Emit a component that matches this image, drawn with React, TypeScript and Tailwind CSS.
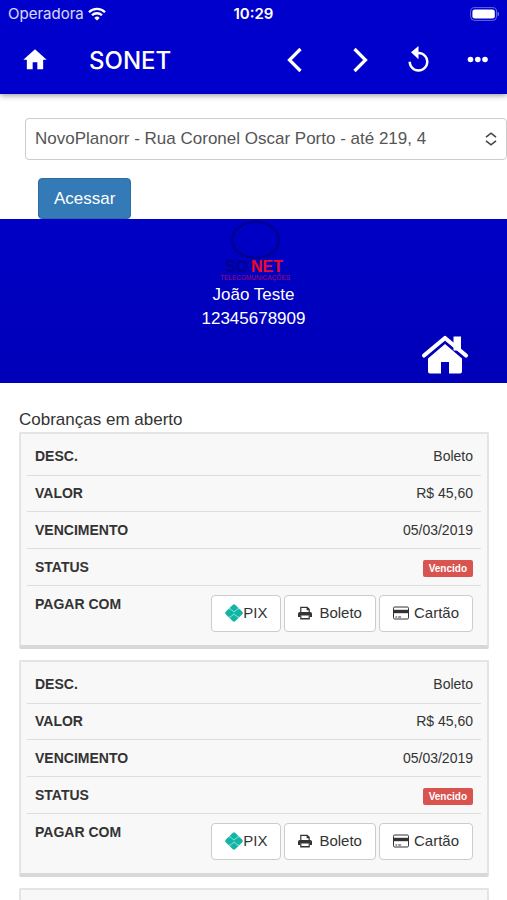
import { useState } from "react";

interface Charge {
  id: number;
  description: string;
  amount: string;
  dueDate: string;
  status: string;
}

const charges: Charge[] = [
  { id: 1, description: "Boleto", amount: "R$ 45,60", dueDate: "05/03/2019", status: "Vencido" },
  { id: 2, description: "Boleto", amount: "R$ 45,60", dueDate: "05/03/2019", status: "Vencido" },
  { id: 3, description: "Boleto", amount: "R$ 45,60", dueDate: "05/03/2019", status: "Vencido" },
];

const plans = ["NovoPlanorr - Rua Coronel Oscar Porto - até 219, 4"];

function StatusBar() {
  return (
    <div className="grid h-7 grid-cols-3 items-center px-2 text-white">
      <div className="flex items-center gap-1 text-[15px] text-white/85">
        <span>Operadora</span>
        <svg viewBox="0 0 18 14" className="h-3.5 w-[18px] shrink-0" fill="none" stroke="white" strokeWidth="2.3">
          <path d="M1 5.2a11.3 11.3 0 0 1 16 0" />
          <path d="M4 8.3a7.1 7.1 0 0 1 10 0" />
          <path d="M9 13.6 6.3 10.9a3.8 3.8 0 0 1 5.4 0z" fill="white" stroke="none" />
        </svg>
      </div>
      <span className="text-center text-[15px] font-semibold">10:29</span>
      <svg viewBox="0 0 30 14" className="h-3.5 w-[30px] justify-self-end">
        <rect x="1.6" y="0.6" width="26" height="12.8" rx="4" fill="none" stroke="white" strokeOpacity="0.4" />
        <rect x="3.4" y="2.4" width="22.4" height="9.2" rx="2.4" fill="white" />
        <path d="M28.6 4.8a2.3 2.3 0 0 1 0 4.4z" fill="white" fillOpacity="0.45" />
      </svg>
    </div>
  );
}

function NavBar() {
  return (
    <nav className="flex h-[66px] items-center pl-5 pr-3.5 text-white">
      <button aria-label="Início" className="flex size-[30px] items-center justify-center">
        <svg viewBox="0 0 24 24" className="size-7" fill="currentColor">
          <path d="M10 19v-6h4v6h5v-8h3L12 2 2 11h3v8z" />
        </svg>
      </button>
      <h1 className="ml-[39px] flex-1 text-2xl font-medium">SONET</h1>
      <div className="flex items-center gap-8">
        <button aria-label="Voltar" className="flex size-[30px] items-center justify-center">
          <svg viewBox="0 0 30 30" className="size-[30px]" fill="none" stroke="currentColor" strokeWidth="3.2">
            <path d="M23.5 3 12.5 14l11 11" />
          </svg>
        </button>
        <button aria-label="Avançar" className="flex size-[30px] items-center justify-center">
          <svg viewBox="0 0 30 30" className="size-[30px]" fill="none" stroke="currentColor" strokeWidth="3.2">
            <path d="m15.500 3 11 11-11 11" />
          </svg>
        </button>
        <button aria-label="Recarregar" className="flex size-[30px] items-center justify-center">
          <svg viewBox="-2 0 24 24" className="size-[30px]" fill="currentColor">
            <path d="M12 4.500V0L6 5l6 5.500V6.500c3.310 0 6 2.690 6 6s-2.690 6-6 6-6-2.690-6-6H4c0 4.420 3.580 8 8 8s8-3.580 8-8-3.580-8-8-8z" />
          </svg>
        </button>
        <button aria-label="Mais opções" className="flex size-[30px] items-center justify-center">
          <svg viewBox="0 0 30 30" className="size-[30px]" fill="currentColor">
            <circle cx="7.5" cy="13.5" r="2.8" />
            <circle cx="14.8" cy="13.5" r="2.8" />
            <circle cx="22" cy="13.5" r="2.8" />
          </svg>
        </button>
      </div>
    </nav>
  );
}

function Logo() {
  return (
    <svg viewBox="0 0 84 64" className="h-16 w-[84px]" role="img" aria-label="Sonet Telecomunicações">
      <ellipse cx="43.5" cy="21" rx="23.5" ry="18" fill="none" stroke="#00008a" strokeWidth="2.2" />
      <g fontFamily="Liberation Sans, Arial, sans-serif">
        <text x="13" y="53" fontSize="16" fontWeight="bold" fill="#00008a">
          SO
        </text>
        <text x="39" y="53" fontSize="16" fontWeight="bold" fill="#f00a1e">
          NET
        </text>
        <text x="8" y="61" fontSize="6.5" fill="#a80a68">
          TELECOMUNICAÇÕES
        </text>
      </g>
    </svg>
  );
}

function PixIcon() {
  return (
    <svg viewBox="0 0 18 18" className="size-[18px]">
      <path
        d="M7.6.9a2 2 0 0 1 2.8 0l6.700 6.700a2 2 0 0 1 0 2.800l-6.700 6.700a2 2 0 0 1-2.800 0L.9 10.400a2 2 0 0 1 0-2.800z"
        fill="#12b5a5"
      />
      <path
        d="M4 4.900h.7c.7 0 1.200.3 1.600.7l2 2c.4.4 1 .4 1.400 0l2-2c.4-.4.9-.7 1.600-.7h.7M4 13.100h.7c.7 0 1.200-.3 1.600-.7l2-2c.4-.4 1-.4 1.400 0l2 2c.4.4.9.7 1.600.7h.7"
        fill="none"
        stroke="#c5f0ea"
        strokeWidth="0.8"
      />
    </svg>
  );
}

function PrinterIcon() {
  return (
    <svg viewBox="0 0 14 14" className="size-3.5" fill="#333">
      <path d="M2.2 6.500V.7h7.200l2.400 2.400v3.400h-1.200V4.200H8.600V1.900H3.400v4.600z" />
      <path d="M1.800 6h10.400A1.800 1.800 0 0 1 14 7.800v3.200h-2.200V9.400H2.200V11H0V7.800A1.800 1.800 0 0 1 1.800 6z" />
      <path d="M2.200 9.200h1.200v2.900h7.200V9.200h1.200v4.200H2.200z" />
    </svg>
  );
}

function CardIcon() {
  return (
    <svg viewBox="0 0 16 14" className="h-3.5 w-4" fill="#333">
      <rect x="0.5" y="1" width="15" height="12" rx="1.2" fill="none" stroke="#333" />
      <path d="M0.5 3.8h15v3.4H.5z" />
      <path d="M2.4 10.4h1.8v1H2.4zM5.2 10.4h2.9v1H5.2z" />
    </svg>
  );
}

const payButton =
  "flex h-[37px] items-center rounded border border-[#ccc] bg-white px-[13px] text-[15px] text-[#333]";

function ChargeCard({ charge }: { charge: Charge }) {
  return (
    <article className="rounded-xs border-2 border-b-4 border-[#e4e4e4] border-b-[#d8d8d8] bg-[#f8f8f8] px-1.5 pt-1">
      <table className="w-full text-sm text-[#333] [&_td]:pr-2 [&_td]:text-right [&_th]:pl-2 [&_th]:text-left">
        <tbody>
          <tr className="h-[37px] border-b border-[#ddd]">
            <th scope="row">DESC.</th>
            <td>{charge.description}</td>
          </tr>
          <tr className="h-9 border-b border-[#ddd]">
            <th scope="row">VALOR</th>
            <td>{charge.amount}</td>
          </tr>
          <tr className="h-[37px] border-b border-[#ddd]">
            <th scope="row">VENCIMENTO</th>
            <td>{charge.dueDate}</td>
          </tr>
          <tr className="h-[37px] border-b border-[#ddd]">
            <th scope="row">STATUS</th>
            <td>
              <span className="inline-block rounded-xs bg-[#d9534f] px-1.5 text-[10px] leading-[17px] font-bold text-white">
                {charge.status}
              </span>
            </td>
          </tr>
          <tr className="h-[60px] align-top">
            <th scope="row" className="pt-2">
              PAGAR COM
            </th>
            <td className="pt-[9px]">
              <div className="flex justify-end gap-[3px]">
                <button className={payButton}>
                  <PixIcon />
                  PIX
                </button>
                <button className={`${payButton} gap-[7px]`}>
                  <PrinterIcon />
                  Boleto
                </button>
                <button className={`${payButton} gap-[5px]`}>
                  <CardIcon />
                  Cartão
                </button>
              </div>
            </td>
          </tr>
        </tbody>
      </table>
    </article>
  );
}

export default function App() {
  const [plan, setPlan] = useState(plans[0]);

  return (
    <div className="flex h-screen flex-col bg-white font-['Liberation_Sans',Arial,sans-serif]">
      <header className="z-10 shrink-0 bg-[#0000cc] font-[Inter,sans-serif] shadow-[0_1px_6px_rgba(0,0,0,0.45)]">
        <StatusBar />
        <NavBar />
      </header>

      <main className="flex-1 overflow-y-auto [scrollbar-width:none]">
        <form className="pt-6 pl-[25px]" onSubmit={(e) => e.preventDefault()}>
          <div className="grid items-center">
            <select
              aria-label="Plano"
              value={plan}
              onChange={(e) => setPlan(e.target.value)}
              className="col-start-1 row-start-1 h-[42px] w-full appearance-none rounded border border-[#ccc] bg-white pr-8 pl-[9px] text-[17px] text-[#555]"
            >
              {plans.map((p) => (
                <option key={p}>{p}</option>
              ))}
            </select>
            <svg
              viewBox="0 0 12 14"
              className="pointer-events-none col-start-1 row-start-1 mr-2.5 h-3.5 w-3 justify-self-end"
              fill="none"
              stroke="#444"
              strokeWidth="1.6"
            >
              <path d="M1 5.2 6 1.2l5 4M1 8.8l5 4 5-4" />
            </svg>
          </div>
          <button className="mt-[18px] ml-[13px] block h-[41px] rounded border border-[#2e6da4] bg-[#337ab7] px-[15px] text-[17px] text-white">
            Acessar
          </button>
        </form>

        <section className="flex h-[164px] flex-col items-center bg-linear-to-b from-[#0000c6] to-[#0000b8] text-[17px] leading-6 text-white">
          <Logo />
          <p>João Teste</p>
          <p>12345678909</p>
          <a href="#inicio" aria-label="Início" className="mt-1 mr-[38px] self-end">
            <svg viewBox="0 0 48 40" className="h-10 w-12" fill="white">
              <path d="M24 9 41 23.500V36.500a2 2 0 0 1-2 2H28V27h-8v11.500H9a2 2 0 0 1-2-2V23.500z" />
              <path d="M2.500 21.500 24 3.500l21.500 18" fill="none" stroke="#0000ba" strokeWidth="7" />
              <path d="M32.500 1.500h7.500v14h-7.500z" />
              <path
                d="M3 20.500 24 3l21 17.500"
                fill="none"
                stroke="white"
                strokeWidth="4.200"
                strokeLinejoin="round"
                strokeLinecap="round"
              />
            </svg>
          </a>
        </section>

        <section className="pt-[25px] pr-[18px] pb-6 pl-[19px]">
          <h2 className="text-[17px] leading-6 text-[#333]">Cobranças em aberto</h2>
          <div className="flex flex-col gap-[11px]">
            {charges.map((charge) => (
              <ChargeCard key={charge.id} charge={charge} />
            ))}
          </div>
        </section>
      </main>
    </div>
  );
}
